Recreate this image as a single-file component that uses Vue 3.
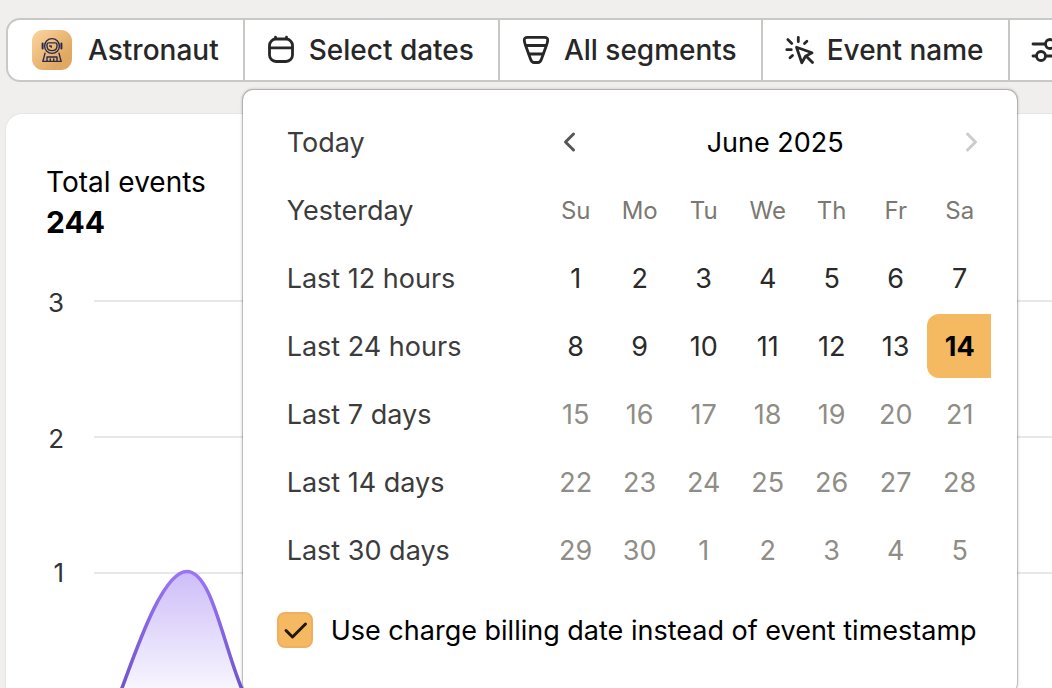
<script setup>
import { ref } from 'vue'

const presets = ['Today', 'Yesterday', 'Last 12 hours', 'Last 24 hours', 'Last 7 days', 'Last 14 days', 'Last 30 days']
const weekdays = ['Su', 'Mo', 'Tu', 'We', 'Th', 'Fr', 'Sa']
const selected = ref(14)
const useBillingDate = ref(true)

const cells = Array.from({ length: 35 }, (_, i) => ({
  label: i < 30 ? i + 1 : i - 29,
  muted: i >= 14,
  index: i + 1,
}))
const weeks = [0, 1, 2, 3, 4].map((w) => cells.slice(w * 7, w * 7 + 7))

const ticks = [
  { label: '3', y: 59, baseline: 70 },
  { label: '2', y: 195, baseline: 206 },
  { label: '1', y: 331, baseline: 340 },
]
</script>

<template>
  <div class="page">
    <nav class="filters" aria-label="Filters">
      <div class="segment">
        <button type="button" class="filter account">
          <svg class="avatar" viewBox="0 0 40 40" aria-hidden="true">
            <defs>
              <linearGradient id="avatarFill" x1="0" y1="0" x2="1" y2="1">
                <stop offset="0.1" stop-color="#f8cf98" />
                <stop offset="0.75" stop-color="#e0a862" />
              </linearGradient>
            </defs>
            <rect width="40" height="40" rx="11" fill="url(#avatarFill)" />
            <g fill="none" stroke="#2b2a4c" stroke-width="1.4" stroke-linecap="round" stroke-linejoin="round">
              <circle cx="20" cy="16" r="7.4" />
              <path d="M15 14.5q0-1.6 1.8-1.6h6.4q1.8 0 1.8 1.6v1.5q0 4.6-5 4.6t-5-4.6z" />
              <path d="M17.6 16h1.6v1.2" />
              <path d="M10.6 13.5v5M29.4 13.5v5" stroke-width="2" />
              <path d="M13 23.2l-1 4-1.2 4.2h18.4L28 27.200l-1-4" />
              <path d="M15 31v-4h10v4M18.300 29v1.500M21.700 29v1.500" />
            </g>
          </svg>
          <span>Astronaut</span>
        </button>
      </div>

      <div class="segment">
        <button type="button" class="filter" aria-expanded="true">
          <svg class="icon" viewBox="0 0 32 32" aria-hidden="true">
            <rect x="4.500" y="5" width="23" height="22.500" rx="6.500" />
            <path d="M4.500 13.800h23M10.500 4v-.8M21.500 4v-.8" />
          </svg>
          <span>Select dates</span>
        </button>

        <section class="popover" aria-label="Date range">
          <div class="picker">
            <ul class="presets">
              <li v-for="p in presets" :key="p">
                <button type="button" class="preset">{{ p }}</button>
              </li>
            </ul>
            <div class="calendar">
              <header class="month">
                <button type="button" class="step" aria-label="Previous month">
                  <svg viewBox="0 0 32 32" aria-hidden="true"><path d="M19.500 8l-8 8 8 8" /></svg>
                </button>
                <span class="month-name">June 2025</span>
                <button type="button" class="step" aria-label="Next month" disabled>
                  <svg viewBox="0 0 32 32" aria-hidden="true"><path d="M12.500 8l8 8-8 8" /></svg>
                </button>
              </header>
              <table class="days">
                <thead>
                  <tr>
                    <th v-for="d in weekdays" :key="d" scope="col">{{ d }}</th>
                  </tr>
                </thead>
                <tbody>
                  <tr v-for="(week, w) in weeks" :key="w">
                    <td v-for="c in week" :key="c.index">
                      <button
                        type="button"
                        class="day"
                        :class="{ selected: c.index === selected }"
                        :disabled="c.muted"
                        @click="selected = c.index"
                      >{{ c.label }}</button>
                    </td>
                  </tr>
                </tbody>
              </table>
            </div>
          </div>
          <label class="billing">
            <span class="check">
              <input v-model="useBillingDate" type="checkbox" />
              <svg v-if="useBillingDate" viewBox="0 0 36 36" aria-hidden="true"><path d="M9 18.500l6.500 6.500L28.500 12" /></svg>
            </span>
            <span class="billing-text">Use charge billing date instead of event timestamp</span>
          </label>
        </section>
      </div>

      <div class="segment">
        <button type="button" class="filter">
          <svg class="icon" viewBox="0 0 32 32" aria-hidden="true">
            <path d="M7.500 3.300h17q3.500 0 3.200 3.400-.2 2-1.400 5L21.500 25q-1.200 3.500-3.500 3.500h-4q-2.300 0-3.500-3.500L5.700 11.700q-1.200-3-1.400-5-.3-3.400 3.200-3.400z" />
            <path d="M6 11.500h20M9 20h14" />
          </svg>
          <span>All segments</span>
        </button>
      </div>

      <div class="segment">
        <button type="button" class="filter">
          <svg class="icon" viewBox="0 0 32 32" aria-hidden="true">
            <path d="M15.300 3.500v4.200M4.800 5.600l4 3.800M3.800 15.700h4.500M7 23.800l2.500-2.300M21.500 9.600l2.400-2.300" />
            <path d="M13.500 13.200L29 18.700 22.500 22.200 18.800 28.700z" />
            <path d="M23.500 22.500l6 6" />
          </svg>
          <span>Event name</span>
        </button>
      </div>

      <div class="segment">
        <button type="button" class="filter" aria-label="More filters">
          <svg class="icon" viewBox="0 0 32 32" aria-hidden="true">
            <path d="M3 10h12.500M24.500 10H29M3 22h3M15.500 22H29" />
            <circle cx="20" cy="10" r="4.500" />
            <circle cx="11" cy="22" r="4.500" />
          </svg>
        </button>
      </div>
    </nav>

    <main class="card">
      <h2 class="title">Total events</h2>
      <p class="total">244</p>
      <svg class="chart" role="img" aria-label="Events over time">
        <defs>
          <linearGradient id="area" gradientUnits="userSpaceOnUse" x1="0" y1="329" x2="0" y2="467">
            <stop offset="0" stop-color="#cdbdf8" />
            <stop offset="1" stop-color="#ffffff" />
          </linearGradient>
          <linearGradient id="line" gradientUnits="userSpaceOnUse" x1="0" y1="329" x2="0" y2="467">
            <stop offset="0" stop-color="#9b75f6" />
            <stop offset="1" stop-color="#6a4fc4" />
          </linearGradient>
        </defs>
        <g v-for="t in ticks" :key="t.label">
          <text x="18" :y="t.baseline" class="tick">{{ t.label }}</text>
          <line x1="48" x2="100%" :y1="t.y" :y2="t.y" class="rule" />
        </g>
        <path d="M67 467L76 446C92 403 117 329.500 141 329.500C165 329.500 176 398 195 445L204 467z" fill="url(#area)" />
        <path d="M67 467L76 446C92 403 117 329.500 141 329.500C165 329.500 176 398 195 445L204 467" class="curve" />
      </svg>
    </main>
  </div>
</template>

<style>
body {
  background: #f0efed;
}
</style>

<style scoped>
* {
  box-sizing: border-box;
}
.page {
  height: 100vh;
  overflow: hidden;
  padding: 18px 0 0 6px;
  background: #f0efed;
  font-family: Inter, "Liberation Sans", sans-serif;
  font-size: 28px;
  line-height: 40px;
  color: #000;
}
button {
  border: 0;
  padding: 0;
  background: none;
  font: inherit;
  color: inherit;
  cursor: pointer;
}
.filters {
  display: flex;
  width: max-content;
  min-width: 100%;
  border: 2px solid #c8c8c7;
  border-radius: 14px;
  background: #fff;
}
.segment {
  position: relative;
}
.segment + .segment {
  border-left: 2px solid #c8c8c7;
}
.filter {
  display: flex;
  align-items: center;
  gap: 12px;
  height: 60px;
  padding: 0 24px 0 20px;
  font-weight: 500;
  color: #272727;
  white-space: nowrap;
}
.account {
  gap: 16px;
  padding-left: 24px;
}
.avatar {
  width: 40px;
  height: 40px;
}
.icon {
  width: 32px;
  height: 32px;
  fill: none;
  stroke: #272727;
  stroke-width: 2.8;
  stroke-linecap: round;
  stroke-linejoin: round;
}
.popover {
  position: absolute;
  z-index: 2;
  top: 70px;
  left: -2px;
  width: 774px;
  padding: 20px 26px 42px 34px;
  border-radius: 10px;
  background: #fff;
  box-shadow: 0 0 0 1px rgba(0, 0, 0, 0.15), 0 0 3px 1px rgba(0, 0, 0, 0.2);
  font-size: 27px;
}
.picker {
  display: flex;
  justify-content: space-between;
}
.presets {
  display: flex;
  flex-direction: column;
  gap: 4px;
  margin: 0;
  padding: 0 0 0 10px;
  list-style: none;
}
.preset {
  display: block;
  height: 64px;
  padding-top: 2px;
  color: #3c3c3c;
  white-space: nowrap;
}
.month {
  display: flex;
  align-items: center;
  height: 64px;
  padding: 0 4px 0 11px;
}
.month-name {
  flex: 1;
  padding: 2px 0 0 10px;
  text-align: center;
}
.step {
  display: flex;
}
.step svg {
  width: 32px;
  height: 32px;
  fill: none;
  stroke: #555;
  stroke-width: 3;
  stroke-linecap: round;
  stroke-linejoin: round;
}
.step:disabled svg {
  stroke: #ccc;
}
.days {
  border-collapse: collapse;
}
.days th,
.days td {
  width: 64px;
  padding: 4px 0 0;
}
.days th {
  height: 68px;
  padding: 6px 0 0 2px;
  font-size: 24px;
  font-weight: 400;
  color: #7b7872;
  text-align: center;
}
.day {
  display: block;
  width: 64px;
  height: 64px;
  padding: 2px 0 0 2px;
  color: #2a2a2a;
}
.day:disabled {
  color: #8f8d87;
}
.day.selected {
  border-radius: 12px 0 0 12px;
  background: #f5b961;
  font-weight: 700;
  color: #000;
}
.billing {
  display: flex;
  align-items: center;
  gap: 18px;
  margin-top: 27px;
  white-space: nowrap;
}
.billing-text {
  padding-top: 2px;
}
.check {
  display: grid;
  flex: none;
  width: 36px;
  height: 36px;
}
.check input,
.check svg {
  grid-area: 1 / 1;
  width: 36px;
  height: 36px;
  margin: 0;
}
.check input {
  appearance: none;
  border: 2px solid #efae62;
  border-radius: 8px;
  background: #fff;
}
.check input:checked {
  background: #f5b961;
}
.check svg {
  fill: none;
  stroke: #22190b;
  stroke-width: 3;
  stroke-linecap: round;
  stroke-linejoin: round;
  pointer-events: none;
}
.card {
  margin-top: 32px;
  padding: 48px 0 0 40px;
  border-radius: 16px 0 0 0;
  background: #fff;
  box-shadow: 0 0 0 1px #e6e6e5;
}
.title,
.total {
  margin: 0;
  font-size: 28px;
  font-weight: 400;
}
.total {
  font-size: 30px;
  font-weight: 700;
}
.chart {
  display: block;
  width: 100%;
  height: 520px;
}
.tick {
  font-size: 26px;
  text-anchor: end;
  fill: #333;
}
.rule {
  stroke: #e8e8e8;
  stroke-width: 2;
}
.curve {
  fill: none;
  stroke: url(#line);
  stroke-width: 3.5;
}
</style>
